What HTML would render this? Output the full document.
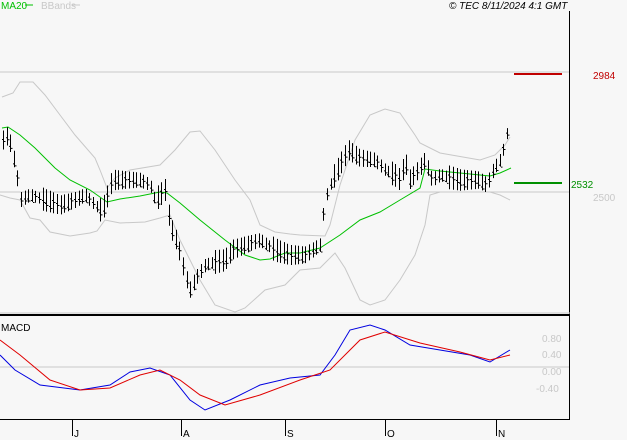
<!DOCTYPE html>
<html><head><style>
html,body{margin:0;padding:0;background:#f7f7f7;width:627px;height:440px;overflow:hidden}
svg{display:block;font-family:"Liberation Sans",sans-serif}
</style></head><body>
<svg id="s" width="627" height="440" viewBox="0 0 627 440">
<rect width="627" height="440" fill="#f7f7f7"/>
<text x="1" y="9" font-size="10" fill="#00c000">MA20</text><line x1="25" y1="5" x2="33" y2="5" stroke="#00c000"/>
<text x="41" y="9" font-size="10" fill="#c8c8c8">BBands</text><line x1="72" y1="5" x2="80" y2="5" stroke="#c8c8c8"/>
<text x="449" y="9" font-size="10" font-style="italic" fill="#000">© TEC 8/11/2024 4:1 GMT</text>
<line x1="0" y1="72" x2="569" y2="72" stroke="#c8c8c8"/>
<line x1="0" y1="192" x2="569" y2="192" stroke="#c8c8c8"/>
<line x1="0" y1="367" x2="569" y2="367" stroke="#c8c8c8"/>
<line x1="569.5" y1="11" x2="569.5" y2="420" stroke="#000"/>
<line x1="0" y1="315" x2="570" y2="315" stroke="#000" stroke-width="2"/>
<line x1="0" y1="313" x2="570" y2="313" stroke="#c8c8c8"/>
<line x1="0" y1="419.5" x2="570" y2="419.5" stroke="#000"/>
<line x1="514" y1="74" x2="562" y2="74" stroke="#c00000" stroke-width="2"/>
<line x1="514" y1="183" x2="562" y2="183" stroke="#009000" stroke-width="2"/>
<text x="593" y="79" font-size="10" fill="#c00000">2984</text>
<text x="571" y="188" font-size="10" fill="#009000">2532</text>
<text x="593" y="201" font-size="10" fill="#c8c8c8">2500</text>
<g font-size="10" fill="#c8c8c8"><text x="542" y="342">0.80</text><text x="542" y="358">0.40</text><text x="542" y="375">0.00</text><text x="536" y="392">-0.40</text></g>
<text x="1" y="331" font-size="10" fill="#000">MACD</text>
<g stroke="#000"><line x1="72.5" y1="420" x2="72.5" y2="436"/><line x1="181.5" y1="420" x2="181.5" y2="436"/><line x1="285.5" y1="420" x2="285.5" y2="436"/><line x1="385.5" y1="420" x2="385.5" y2="436"/><line x1="496.5" y1="420" x2="496.5" y2="436"/></g>
<g font-size="10" fill="#000"><text x="74" y="437">J</text><text x="183" y="437">A</text><text x="287" y="437">S</text><text x="387" y="437">O</text><text x="498" y="437">N</text></g>
<g id="g" fill="none"></g>
</svg>
<script>
var g=document.getElementById('g'),NS='http://www.w3.org/2000/svg';
function pl(p,c){var e=document.createElementNS(NS,'polyline');e.setAttribute('points',p.map(a=>a.join(',')).join(' '));e.setAttribute('stroke',c);g.appendChild(e);}
function interp(p,x){for(var i=0;i<p.length-1;i++){if(x>=p[i][0]&&x<=p[i+1][0]){var t=(x-p[i][0])/(p[i+1][0]-p[i][0]);return p[i][1]+t*(p[i+1][1]-p[i][1]);}}return p[p.length-1][1];}
pl([[2,97],[13,93],[20,82],[33,82],[45,95],[60,115],[75,135],[95,158],[100,170],[107,188],[115,178],[130,170],[160,165],[175,150],[190,132],[200,131],[215,150],[235,180],[250,200],[260,225],[275,232],[290,234],[300,235],[325,236],[330,225],[340,185],[355,140],[370,115],[385,109],[400,113],[415,135],[420,143],[440,153],[480,160],[495,155],[505,145],[510,137]],'#c8c8c8');
pl([[0,195],[10,198],[20,200],[30,218],[40,220],[50,232],[70,236],[90,233],[97,231],[105,220],[120,223],[145,222],[160,218],[170,215],[180,240],[190,260],[200,280],[215,305],[235,312],[245,308],[265,290],[285,285],[300,270],[320,268],[335,253],[345,268],[360,300],[370,305],[385,300],[400,280],[415,255],[425,225],[430,195],[440,192],[470,192],[490,192],[500,195],[510,200]],'#c8c8c8');
pl([[2,128],[8,127],[20,135],[35,148],[55,168],[70,180],[90,190],[107,202],[120,199],[140,196],[160,192],[167,193],[180,203],[200,220],[225,240],[245,255],[260,260],[270,259],[285,253],[300,253],[320,248],[340,235],[360,220],[380,212],[400,200],[420,188],[425,169],[440,171],[470,174],[490,176],[500,173],[511,168]],'#00c000');
pl([[0,355],[15,370],[40,385],[80,390],[110,385],[130,372],[150,368],[170,375],[190,400],[205,410],[230,400],[260,385],[290,378],[320,375],[335,355],[350,330],[370,325],[385,330],[410,345],[440,350],[470,355],[490,362],[510,350]],'#0000e0');
pl([[0,340],[20,355],[50,380],[80,390],[110,388],[140,375],[160,370],[180,380],[200,395],[225,405],[260,395],[300,380],[330,370],[360,340],[385,332],[420,343],[460,352],[490,360],[510,355]],'#e00000');
var pc=[[3,140],[8,135],[12,150],[17,175],[20,200],[30,195],[45,200],[60,205],[75,200],[85,195],[100,210],[105,205],[112,180],[125,180],[140,180],[150,185],[155,200],[160,195],[165,190],[170,225],[178,245],[185,275],[190,290],[195,280],[205,265],[215,262],[225,260],[232,250],[245,245],[260,240],[275,250],[290,255],[305,255],[320,245],[325,200],[332,180],[348,150],[360,158],[375,160],[385,170],[395,175],[400,180],[405,160],[410,180],[418,170],[425,160],[432,180],[440,175],[460,180],[478,180],[487,185],[493,170],[500,160],[505,145],[508,128]];
var d='';
for(var x=3;x<=510;x+=3.6){var y=interp(pc,x),h=11+((x*7)%13);var o=y+((x*13)%9)-4;var X=Math.round(x);d+='M'+(X+.5)+','+(y-h/2)+'V'+(y+h/2)+'M'+(X-1)+','+(o+.5)+'h1.5M'+(X+1)+','+(o+2.5)+'h1.5';}
var e=document.createElementNS(NS,'path');e.setAttribute('d',d);e.setAttribute('stroke','#000');g.appendChild(e);
</script>
</body></html>
